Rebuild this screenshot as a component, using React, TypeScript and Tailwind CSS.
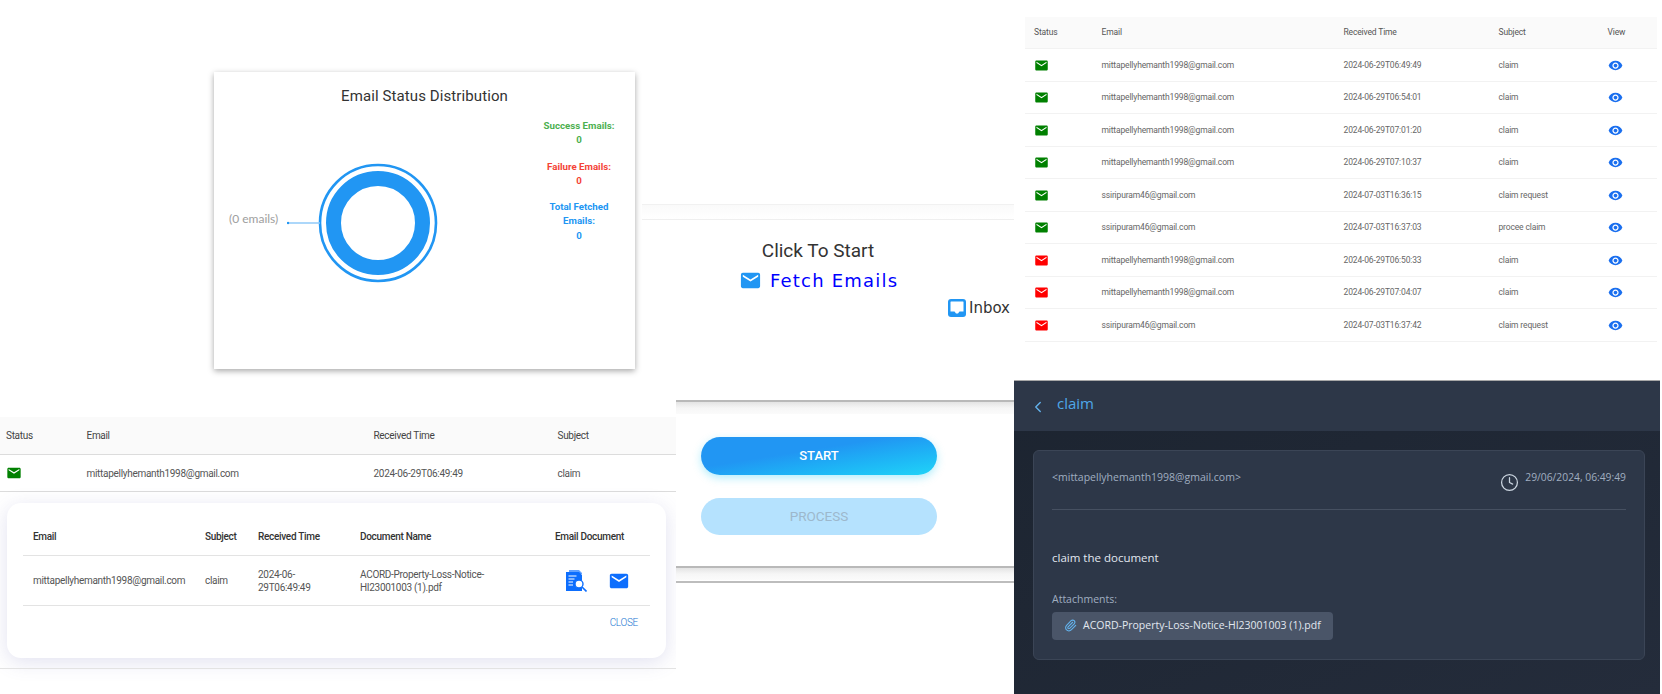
import { ChevronLeft, Clock, Paperclip } from "lucide-react";
import { MdEmail, MdRemoveRedEye } from "react-icons/md";

const inboxRows = [
  { ok: true, email: "mittapellyhemanth1998@gmail.com", time: "2024-06-29T06:49:49", subject: "claim" },
  { ok: true, email: "mittapellyhemanth1998@gmail.com", time: "2024-06-29T06:54:01", subject: "claim" },
  { ok: true, email: "mittapellyhemanth1998@gmail.com", time: "2024-06-29T07:01:20", subject: "claim" },
  { ok: true, email: "mittapellyhemanth1998@gmail.com", time: "2024-06-29T07:10:37", subject: "claim" },
  { ok: true, email: "ssiripuram46@gmail.com", time: "2024-07-03T16:36:15", subject: "claim request" },
  { ok: true, email: "ssiripuram46@gmail.com", time: "2024-07-03T16:37:03", subject: "procee claim" },
  { ok: false, email: "mittapellyhemanth1998@gmail.com", time: "2024-06-29T06:50:33", subject: "claim" },
  { ok: false, email: "mittapellyhemanth1998@gmail.com", time: "2024-06-29T07:04:07", subject: "claim" },
  { ok: false, email: "ssiripuram46@gmail.com", time: "2024-07-03T16:37:42", subject: "claim request" },
];

function Donut() {
  return (
    <svg width="152" height="130" viewBox="0 0 152 130" className="block shrink-0">
      <circle cx="91" cy="65" r="58" fill="none" stroke="#2196f3" strokeWidth="2.6" />
      <circle cx="91" cy="65" r="44.5" fill="none" stroke="#2196f3" strokeWidth="15" />
      <line x1="33" y1="65" x2="0" y2="65" stroke="#90caf9" strokeWidth="1.5" />
      <circle cx="1" cy="65" r="1.2" fill="#2196f3" />
    </svg>
  );
}

function StatusCard() {
  return (
    <div className="ml-[214px] h-[297px] w-[421px] bg-white pt-[14px] shadow-[0_2px_6px_rgba(0,0,0,0.35)]">
      <h2 className="text-center text-[15px] leading-[20px] tracking-[0.1px] text-[#333]">Email Status Distribution</h2>
      <div className="mt-[4px] flex">
        <div className="flex w-[327px] items-start pl-[15px] pt-[48px]">
          <span className="mt-[53px] w-[58px] shrink-0 font-[Lato,sans-serif] text-[12px] leading-[16px] text-[#9e9e9e]">(0 emails)</span>
          <Donut />
        </div>
        <div className="flex w-[76px] flex-col gap-[12px] pt-[9px] text-center text-[9.7px] font-bold leading-[14.3px]">
          <p className="text-[#4caf50]">Success Emails:<br />0</p>
          <p className="text-[#f44336]">Failure Emails:<br />0</p>
          <p className="text-[#2196f3]">Total Fetched Emails:<br />0</p>
        </div>
      </div>
    </div>
  );
}

function DocSearchIcon() {
  return (
    <svg width="21" height="22" viewBox="0 0 21 22">
      <path d="M3 0h10l3 3v1H3z" fill="#0d6efd" opacity="0.65" />
      <path d="M0 2h13l3 3v16H0z" fill="#0d6efd" />
      <path d="M2.5 6h8M2.5 9h6M2.5 12h4.5M2.5 15h4.5" stroke="#fff" strokeWidth="1" />
      <circle cx="13" cy="14" r="4" fill="#fff" stroke="#0d6efd" strokeWidth="1.4" />
      <line x1="16" y1="17" x2="20.5" y2="21.5" stroke="#0d6efd" strokeWidth="1.6" />
    </svg>
  );
}

function SingleEmailPanel() {
  return (
    <div className="mt-[48px] text-[10px] tracking-[-0.3px]">
      <div className="grid h-[38px] grid-cols-[80.5px_287px_184px_1fr] items-center border-b border-[#dcdcdc] bg-[#fafafa] pl-[6px] text-[#444]">
        <span>Status</span>
        <span>Email</span>
        <span>Received Time</span>
        <span>Subject</span>
      </div>
      <div className="grid h-[37px] grid-cols-[80.5px_287px_184px_1fr] items-center border-b border-[#dcdcdc] pl-[6px] text-[#555]">
        <MdEmail size={16} color="#008000" />
        <span>mittapellyhemanth1998@gmail.com</span>
        <span>2024-06-29T06:49:49</span>
        <span>claim</span>
      </div>
      <div className="ml-[7px] mr-[10px] mt-[11px] h-[155px] rounded-[14px] bg-white px-[16px] pt-[17px] shadow-[0_4px_20px_rgba(90,90,170,0.18)]">
        <div className="grid h-[36px] grid-cols-[172px_53px_102px_1fr_auto] items-center border-b border-[#e3e3e3] pb-[2px] pl-[10px] pr-[26px] font-medium text-[#333]">
          <span>Email</span>
          <span>Subject</span>
          <span>Received Time</span>
          <span>Document Name</span>
          <span>Email Document</span>
        </div>
        <div className="grid h-[50px] grid-cols-[172px_53px_102px_206px_1fr] items-center border-b border-[#e3e3e3] pl-[10px] leading-[13px] text-[#555]">
          <span>mittapellyhemanth1998@gmail.com</span>
          <span>claim</span>
          <span>2024-06-<br />29T06:49:49</span>
          <span>ACORD-Property-Loss-Notice-<br />HI23001003 (1).pdf</span>
          <div className="flex items-center gap-[21px]">
            <DocSearchIcon />
            <MdEmail size={22} color="#0d6efd" />
          </div>
        </div>
        <div className="pr-[12px] pt-[10px] text-right text-[10px] font-light leading-[14px] text-[#1976d2]">CLOSE</div>
      </div>
      <div className="mt-[10px] h-px bg-[#e3e3e3]" />
    </div>
  );
}

function ShadowLine({ dark }: { dark?: boolean }) {
  return <div className={dark ? "h-[14px] border-t-2 border-[#b9b9b9] bg-gradient-to-b from-[#e4e4e4] via-[#f6f6f6] to-[#fbfbfb]" : "h-[15px] border-t border-[#f1f1f1] bg-gradient-to-b from-[#fafafa] to-white"} />;
}

function FetchPanel() {
  return (
    <div className="relative z-10 bg-white">
      <div className="h-[204px]" />
      <div className="-ml-[34px] bg-white">
        <ShadowLine />
        <div className="h-[3px] border-t border-[#efefef]" />
        <div className="h-[178px]">
          <p className="pl-[34px] pr-[54px] pt-[16px] text-center text-[19px] leading-[26px] text-[#333]">Click To Start</p>
          <div className="mt-[5px] flex items-center pl-[97px]">
            <MdEmail size={23} color="#2196f3" />
            <span className="ml-[8px] font-['DejaVu_Sans',sans-serif] text-[18px] leading-[22px] tracking-[1.2px] text-[#0000ff]">Fetch Emails</span>
          </div>
          <div className="mt-[7px] flex items-center justify-end gap-[3px] pr-[4px]">
            <svg width="18" height="18" viewBox="0 0 18 18">
              <rect width="18" height="18" rx="3" fill="#2196f3" />
              <path d="M3 2.5h12a.5.5 0 0 1 .5.5v9.5H11.5L10 14.5H8L6.5 12.5H2.5V3a.5.5 0 0 1 .5-.5z" fill="#fff" />
            </svg>
            <span className="font-['DejaVu_Sans',sans-serif] text-[15px] leading-[18px] text-[#333]">Inbox</span>
          </div>
        </div>
      </div>
      <ShadowLine dark />
      <div className="h-[152px] pl-[25px] pt-[23px]">
        <div className="flex h-[38px] w-[236px] items-center justify-center rounded-full bg-gradient-to-br from-[#2196f3] from-[40%] to-[#21d4f7] text-[13px] font-medium text-white shadow-[0_3px_8px_rgba(33,203,243,0.35)]">START</div>
        <div className="mt-[23px] flex h-[37px] w-[236px] items-center justify-center rounded-full bg-[#b5e2fe] text-[13.5px] text-[#9db8cc]">PROCESS</div>
      </div>
      <ShadowLine dark />
      <div className="mt-px h-[2px] border-t-2 border-[#bdbdbd]" />
    </div>
  );
}

function InboxTable() {
  return (
    <div className="ml-[11px] mt-[17px] w-[632px] text-[8.5px] tracking-[-0.15px]">
      <div className="grid h-[32px] grid-cols-[67.5px_242px_155px_109px_1fr] items-center border-b border-[#f2f2f2] bg-[#fafafa] pl-[9px] text-[#555]">
        <span>Status</span>
        <span>Email</span>
        <span>Received Time</span>
        <span>Subject</span>
        <span>View</span>
      </div>
      {inboxRows.map((row) => (
        <div key={row.time} className="grid h-[32.5px] grid-cols-[67.5px_242px_155px_109px_1fr] items-center border-b border-[#f2f2f2] pl-[9px] pt-px text-[#666]">
          <MdEmail size={15} color={row.ok ? "#008000" : "#ff0000"} />
          <span>{row.email}</span>
          <span>{row.time}</span>
          <span>{row.subject}</span>
          <MdRemoveRedEye size={15} color="#1a6fef" />
        </div>
      ))}
    </div>
  );
}

function EmailDetail() {
  return (
    <div className="mt-[39px] h-[314px] w-[646px] bg-gradient-to-br from-[#1c2430] to-[#242c3b] font-['Open_Sans',sans-serif] shadow-[0_-1px_0_#a8a8a8]">
      <div className="flex h-[50px] items-center bg-[#2d3748] pl-[15px]">
        <ChevronLeft size={18} strokeWidth={1.8} color="#63b3ed" className="mt-[3px]" />
        <span className="-mt-[6px] ml-[10px] text-[15px] font-medium leading-[20px] text-[#4fa8e8]">claim</span>
      </div>
      <div className="ml-[19px] mt-[19px] h-[210px] w-[612px] rounded-[6px] border border-[#3b4556] bg-[#2d3748] px-[18px] pt-[18px]">
        <div className="flex h-[41px] items-start justify-between border-b border-[#465061]">
          <span className="text-[10.5px] leading-[16px] text-[#a0aec0]">&lt;mittapellyhemanth1998@gmail.com&gt;</span>
          <div className="flex items-start gap-[6px]">
            <Clock size={19} strokeWidth={1.6} color="#cbd5e0" className="mt-[4px]" />
            <span className="text-[10.3px] leading-[16px] text-[#a0aec0]">29/06/2024, 06:49:49</span>
          </div>
        </div>
        <p className="mt-[39px] text-[11.5px] leading-[18px] text-[#e2e8f0]">claim the document</p>
        <p className="mt-[24px] text-[10.5px] leading-[16px] text-[#a0aec0]">Attachments:</p>
        <div className="mt-[5px] flex h-[28px] w-[281px] items-center gap-[6px] rounded-[4px] bg-[#4a5568] pl-[12px]">
          <Paperclip size={13} color="#63b3ed" />
          <span className="text-[10.5px] text-[#e2e8f0]">ACORD-Property-Loss-Notice-HI23001003 (1).pdf</span>
        </div>
      </div>
    </div>
  );
}

export default function App() {
  return (
    <div className="flex h-[694px] w-[1662px] overflow-hidden bg-white font-[Roboto,sans-serif]">
      <div className="w-[676px] shrink-0 overflow-hidden pt-[72px]">
        <StatusCard />
        <SingleEmailPanel />
      </div>
      <div className="w-[338px] shrink-0">
        <FetchPanel />
      </div>
      <div className="relative z-20 w-[648px] shrink-0">
        <InboxTable />
        <EmailDetail />
      </div>
    </div>
  );
}
